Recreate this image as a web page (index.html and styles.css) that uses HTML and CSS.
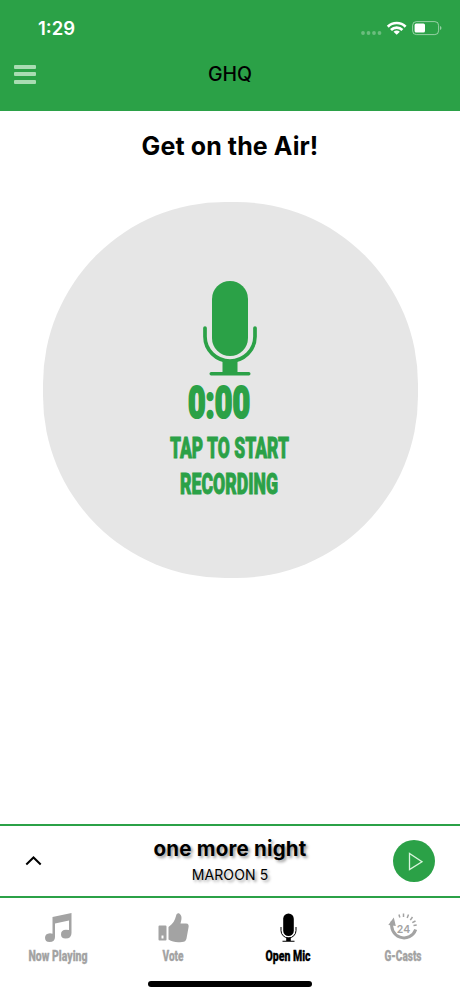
FILE: index.html
```
<!DOCTYPE html>
<html lang="en">
<head>
    <meta charset="UTF-8">
    <meta name="viewport" content="width=device-width, initial-scale=1.0">
    <title>GHQ</title>
    <link rel="stylesheet" href="styles.css">
</head>
<body>

    <div class="app">
        <header class="header">
            <!-- Status bar -->
            <div class="status">
                <span class="time">1:29</span>
                <svg class="status-icons" width="84" height="18" viewBox="0 0 84 18">
                    <g fill="#fff" fill-opacity="0.3">
                        <circle cx="4" cy="14" r="1.900"/>
                        <circle cx="9.500" cy="14" r="1.900"/>
                        <circle cx="15" cy="14" r="1.900"/>
                        <circle cx="20.500" cy="14" r="1.900"/>
                    </g>
                    <g fill="none" stroke="#fff" stroke-width="2.700">
                        <path d="M28.800 7.700A12.500 12.500 0 0 1 46.600 7.700"/>
                        <path d="M32 11A8 8 0 0 1 43.400 11"/>
                    </g>
                    <path d="M37.700 15.800L34.500 12.800Q37.700 10.400 40.900 12.800Z" fill="#fff"/>
                    <rect x="53.600" y="2.600" width="26" height="13" rx="3.800" fill="none" stroke="#fff" stroke-opacity="0.500"/>
                    <rect x="55.600" y="4.600" width="10.400" height="9" rx="1.500" fill="#fff"/>
                    <path d="M81 7v4q1.500-.6 1.500-2t-1.500-2z" fill="#fff" fill-opacity="0.500"/>
                </svg>
            </div>
            <!-- Title bar -->
            <div class="title-bar">
                <div class="menu"><i></i><i></i><i></i></div>
                <span class="title">GHQ</span>
            </div>
        </header>

        <main class="main">
            <h1>Get on the Air!</h1>
            <div class="record">
                <svg class="mic" width="54" height="95" viewBox="0 0 54 95" fill="currentColor">
                    <rect x="9" y="0" width="36" height="75" rx="18"/>
                    <path d="M2 47v8.500a25 24.500 0 0 0 50 0V47" fill="none" stroke="currentColor" stroke-width="3.700" stroke-linecap="round"/>
                    <path d="M19.500 79h15v12h-15z"/>
                    <rect x="6.500" y="91" width="41" height="3.500" rx="1.700"/>
                </svg>
                <svg class="record-text" width="140" height="120" viewBox="0 0 140 120">
                    <text class="timer" x="28" y="42" font-size="44" textLength="62" lengthAdjust="spacingAndGlyphs">0:00</text>
                    <text x="10" y="82" font-size="29" textLength="119" lengthAdjust="spacingAndGlyphs">TAP TO START</text>
                    <text x="20" y="118" font-size="29" textLength="98" lengthAdjust="spacingAndGlyphs">RECORDING</text>
                </svg>
            </div>
        </main>

        <!-- Mini player -->
        <section class="player">
            <svg class="chevron" width="18" height="12" viewBox="0 0 18 12"><path d="M1.300 9.500L8.500 2.500l7.200 7"/></svg>
            <div class="track">
                <div class="song">one more night</div>
                <div class="artist">MAROON 5</div>
            </div>
            <div class="play">
                <svg width="42" height="42" viewBox="0 0 42 42"><path d="M16.500 13.500v16L29 21.700z"/></svg>
            </div>
        </section>

        <!-- Bottom tabs -->
        <nav class="tabs">
            <div class="tab">
                <svg width="32" height="32" viewBox="0 0 32 32" fill="currentColor">
                    <path d="M10.500 5L29.500 1V21q0 5.500-6 5.500-4.500 0-4.500-4.300t5-4.500q2 0 3 .4V8.500L13 11.500V25q0 5-5.500 5-4.500 0-4.500-4.200T8 21.300q1.600 0 2.500.4z"/>
                </svg>
                <svg class="label" width="60" height="20"><text x="0.500" y="16" textLength="59" lengthAdjust="spacingAndGlyphs">Now Playing</text></svg>
            </div>
            <div class="tab">
                <svg width="32" height="32" viewBox="0 0 32 32" fill="currentColor">
                    <path fill-rule="evenodd" d="M2.500 13.500h6q1 0 1 1v13q0 1-1 1h-6q-1 0-1-1v-13q0-1 1-1zM4.500 23.500v3h2v-3z"/>
                    <path d="M11.500 15C16 12 18 8 19 4c.5-2.500 2-3.200 3.600-2.200C25.500 4 24.500 8 23.500 11.500h5.500c2.500 0 3 2 2.500 4l-2 11c-.5 2.500-2 3.500-4.500 3.500-6 .5-9.500 0-13.500-2.500z"/>
                </svg>
                <svg class="label" width="22" height="20"><text x="0.500" y="16" textLength="21" lengthAdjust="spacingAndGlyphs">Vote</text></svg>
            </div>
            <div class="tab active">
                <svg width="32" height="32" viewBox="0 0 32 32" fill="currentColor">
                    <rect x="11.200" y="1.500" width="10.600" height="22.500" rx="5.300"/>
                    <path d="M9 15v3.500a7.500 7.500 0 0 0 15 0V15" fill="none" stroke="currentColor"/>
                    <path d="M14.200 25.500h4.600v3.200h3.700v1.100h-12v-1.100h3.700z"/>
                </svg>
                <svg class="label" width="46" height="20"><text x="0.500" y="16" textLength="45" lengthAdjust="spacingAndGlyphs">Open Mic</text></svg>
            </div>
            <div class="tab">
                <svg width="32" height="32" viewBox="0 0 32 32" fill="currentColor">
                    <path d="M5.300 9.500A12 12 0 1 0 28.700 17.500" fill="none" stroke="currentColor" stroke-width="3"/>
                    <path d="M1.300 13L6.800 5.500 8.800 14z"/>
                    <path d="M12 2.500l.8 3M16.500 1.500v3.500M21.500 2.500l-1.300 3.500M25.500 5l-2.200 3.200M28.500 9l-3.200 1.700M29.700 13l-3.200.4" fill="none" stroke="currentColor" stroke-width="1.500"/>
                    <text class="hours" x="9.800" y="20.500">24</text>
                </svg>
                <svg class="label" width="38" height="20"><text x="0.500" y="16" textLength="37" lengthAdjust="spacingAndGlyphs">G-Casts</text></svg>
            </div>
        </nav>
        <div class="home-bar"></div>
    </div>

</body>
</html>
```
FILE: styles.css
```
body {
    margin: 0;
    background-color: #fff;
    color: #000;
    font-family: Inter, sans-serif;
}

svg {
    overflow: visible;
}

.app {
    height: 996px;
    display: flex;
    flex-direction: column;
    overflow: hidden;
}

/* Green header */
.header {
    height: 110.5px;
    background-color: #2ba147;
    flex: none;
}

.status {
    display: flex;
    justify-content: space-between;
    align-items: center;
    height: 38px;
    padding: 18px 17px 0 38px;
    box-sizing: border-box;
}

.time {
    color: #fff;
    font-size: 18.5px;
    font-weight: 600;
}

.title-bar {
    display: grid;
    grid-template-columns: 1fr auto 1fr;
    align-items: center;
    height: 71px;
    padding: 0 14px;
}

.menu {
    display: flex;
    flex-direction: column;
    gap: 3.5px;
    width: 22px;
    padding-top: 1px;
}

.menu i {
    height: 4px;
    border-radius: 1px;
    background-color: #a9dcb3;
}

.title {
    font-size: 19.5px;
    font-weight: 500;
}

/* Recording area */
.main {
    flex: 1;
    display: flex;
    flex-direction: column;
    align-items: center;
}

h1 {
    margin: 19.5px 0 0;
    height: 72px;
    line-height: 32px;
    font-size: 25px;
    font-weight: 700;
    letter-spacing: 0.1px;
}

.record {
    width: 375px;
    height: 376px;
    border-radius: 182px;
    background-color: #e6e6e6;
    color: #2ba147;
    display: flex;
    flex-direction: column;
    align-items: center;
}

.mic {
    margin-top: 79px;
}

/* Heavy condensed lettering */
.record-text {
    font-family: Roboto, sans-serif;
    font-weight: 900;
    fill: currentColor;
    stroke: currentColor;
    stroke-width: 0.9px;
}

.timer {
    stroke-width: 2px;
}

/* Mini player */
.player {
    height: 70px;
    flex: none;
    border-top: 2px solid #2ba147;
    border-bottom: 2px solid #2ba147;
    display: grid;
    grid-template-columns: 42px 1fr 42px;
    align-items: center;
    padding: 0 25px;
}

.chevron {
    fill: none;
    stroke: #000;
    stroke-width: 2;
}

.track {
    text-align: center;
    text-shadow: 2px 2px 3px rgba(0, 0, 0, 0.4);
}

.song {
    font-size: 20.5px;
    font-weight: 700;
    line-height: 28px;
    letter-spacing: 0.2px;
}

.artist {
    font-size: 14px;
    line-height: 24px;
    letter-spacing: 0.1px;
}

.play {
    width: 42px;
    height: 42px;
    border-radius: 50%;
    background-color: #2ba147;
}

.play path {
    fill: none;
    stroke: #d8f5dc;
    stroke-width: 1.3;
}

/* Bottom tabs */
.tabs {
    display: grid;
    grid-template-columns: repeat(4, 1fr);
    height: 83px;
    flex: none;
    color: #a3a3a3;
}

.tab {
    display: flex;
    flex-direction: column;
    align-items: center;
    padding: 14px 0 0;
}

.tab.active {
    color: #000;
}

.label {
    margin-top: 1px;
    font-family: Roboto, sans-serif;
    font-size: 14.5px;
    font-weight: 900;
    fill: currentColor;
    stroke: currentColor;
    stroke-width: 0.3px;
}

.hours {
    font-family: Inter, sans-serif;
    font-size: 10.5px;
    font-weight: 600;
}

.home-bar {
    flex: none;
    width: 164px;
    height: 6px;
    margin: 0 auto 9px;
    border-radius: 3px;
    background-color: #000;
}
```
